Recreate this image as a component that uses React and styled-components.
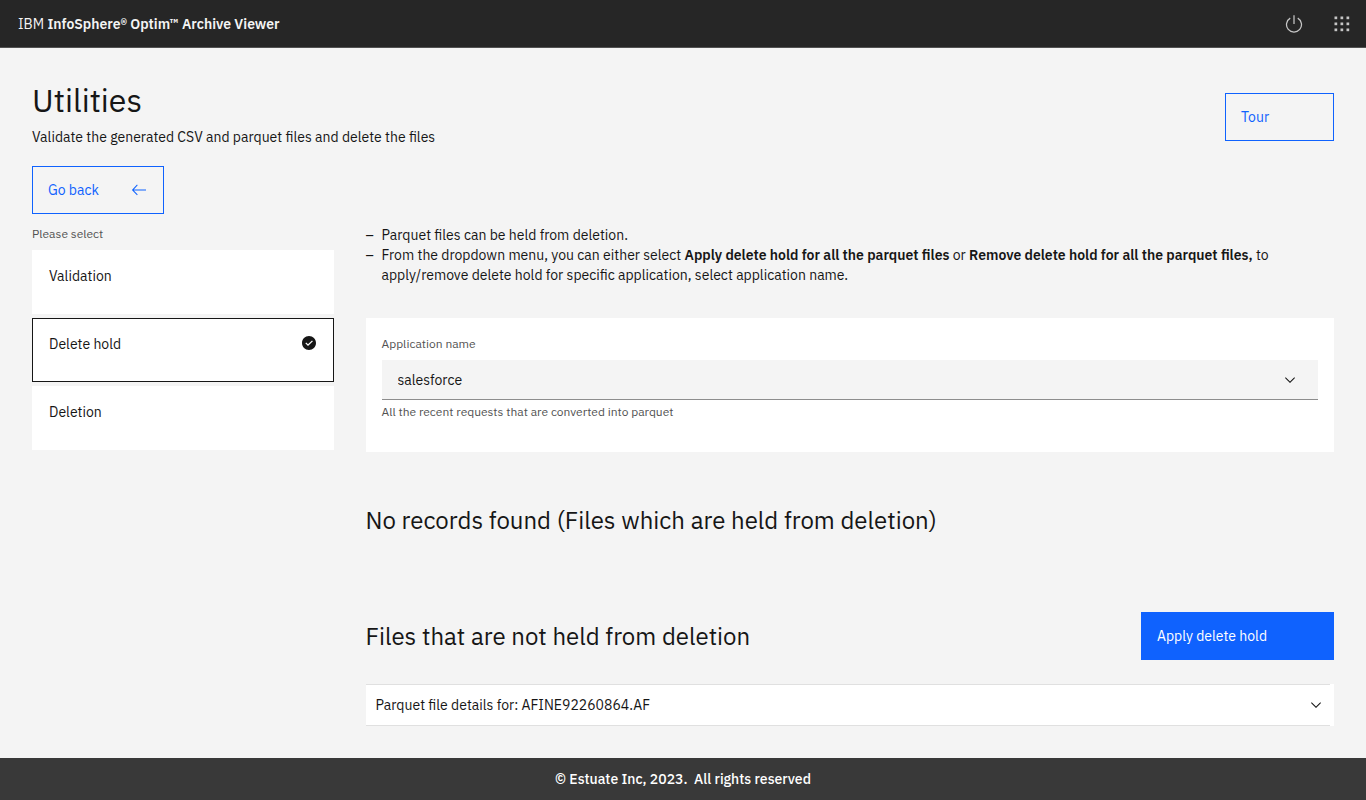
import React, { useState } from "react";
import styled, { createGlobalStyle } from "styled-components";

const GlobalStyle = createGlobalStyle`
  *, *::before, *::after { box-sizing: border-box; }
  body {
    margin: 0;
    background: #f4f4f4;
    color: #161616;
    font-family: "IBM Plex Sans", "Noto Sans", "Liberation Sans", sans-serif;
    font-size: 14px;
    line-height: 20px;
  }
  button, input, select { font: inherit; color: inherit; }
  h1, h2, p, ul { margin: 0; }
`;

const Page = styled.div`
  min-height: 100vh;
  display: flex;
  flex-direction: column;
`;

const Header = styled.header`
  height: 48px;
  display: flex;
  align-items: center;
  justify-content: space-between;
  padding-left: 18px;
  background: #262626;
  color: #f4f4f4;
  border-bottom: 1px solid #525252;
`;

const Brand = styled.a`
  color: inherit;
  text-decoration: none;
  strong { font-weight: 600; }
`;

const HeaderActions = styled.div`
  display: flex;
`;

const IconButton = styled.button`
  width: 48px;
  height: 48px;
  display: flex;
  align-items: center;
  justify-content: center;
  padding: 0;
  border: 0;
  background: none;
  color: #c6c6c6;
`;

const Icon = styled.svg`
  flex: none;
  display: block;
  fill: currentColor;
`;

const Main = styled.main`
  flex: 1;
  padding: 32px;
`;

const Intro = styled.div`
  display: flex;
  align-items: center;
  justify-content: space-between;
  padding-bottom: 20px;
`;

const Title = styled.h1`
  font-size: 32px;
  line-height: 40px;
  font-weight: 400;
  margin-bottom: 8px;
`;

const Subtitle = styled.p`
  line-height: 18px;
`;

const IntroActions = styled.div`
  padding-top: 8px;
`;

const Button = styled.button`
  min-width: ${(p) => p.$minWidth || 0}px;
  height: 48px;
  display: inline-flex;
  align-items: center;
  justify-content: space-between;
  padding: 0 ${(p) => (p.$icon ? 16 : 63)}px 0 15px;
  border: 1px solid #0f62fe;
  background: ${(p) => (p.$primary ? "#0f62fe" : "transparent")};
  color: ${(p) => (p.$primary ? "#ffffff" : "#0f62fe")};
`;

const Columns = styled.div`
  display: grid;
  grid-template-columns: repeat(16, minmax(0, 1fr));
  column-gap: 32px;
`;

const Sidebar = styled.fieldset`
  grid-column: span 4;
  min-width: 0;
  margin: 0;
  padding: 0;
  border: 0;
`;

const SmallText = styled.span`
  display: block;
  font-size: 12px;
  line-height: 16px;
  color: #525252;
`;

const Legend = styled(SmallText)`
  padding: 12px 0 0;
`;

const Tiles = styled.div`
  display: flex;
  flex-direction: column;
  gap: 4px;
  margin-top: 8px;
`;

const Tile = styled.label`
  min-height: 64px;
  display: flex;
  justify-content: space-between;
  padding: 16px;
  line-height: 18px;
  background: #ffffff;
  border: 1px solid ${(p) => (p.$selected ? "#161616" : "#ffffff")};
`;

const HiddenRadio = styled.input`
  position: absolute;
  opacity: 0;
  width: 1px;
  height: 1px;
  margin: 0;
`;

const Content = styled.div`
  grid-column: span 12;
  padding-top: 11px;
`;

const Notes = styled.ul`
  padding: 0;
  list-style: none;
`;

const Note = styled.li`
  display: flex;
  strong { font-weight: 600; }
  &::before { content: "–"; flex: none; width: 16px; }
`;

const Card = styled.section`
  margin-top: 33px;
  padding: 18px 16px 32px;
  background: #ffffff;
`;

const SelectBox = styled.div`
  position: relative;
  margin: 8px 0 4px;
`;

const Select = styled.select`
  appearance: none;
  display: block;
  width: 100%;
  height: 40px;
  padding: 0 48px 0 16px;
  border: 0;
  border-bottom: 1px solid #8d8d8d;
  border-radius: 0;
  background: #f4f4f4;
`;

const SelectArrow = styled.span`
  position: absolute;
  top: 12px;
  right: 20px;
  pointer-events: none;
`;

const Heading = styled.h2`
  font-size: 24px;
  line-height: 32px;
  font-weight: 400;
`;

const EmptyHeading = styled(Heading)`
  margin-top: 52px;
`;

const SectionBar = styled.div`
  display: flex;
  align-items: center;
  justify-content: space-between;
  margin: 76px 0 24px;
`;

const Accordion = styled.div`
  padding-right: 4px;
  background: #ffffff;
`;

const AccordionButton = styled.button`
  width: 100%;
  height: 42px;
  display: flex;
  align-items: center;
  justify-content: space-between;
  padding: 0 6px 0 10px;
  border: 0;
  border-top: 1px solid #e0e0e0;
  border-bottom: 1px solid #e0e0e0;
  background: none;
  text-align: left;
`;

const Footer = styled.footer`
  height: 42px;
  display: flex;
  align-items: center;
  justify-content: center;
  background: #393939;
  color: #ffffff;
  font-weight: 500;
  white-space: pre;
`;

const Chevron = () => (
  <Icon width="16" height="16" viewBox="0 0 16 16" aria-hidden="true">
    <path d="M8 11L3 6 3.7 5.3 8 9.6 12.3 5.3 13 6z" />
  </Icon>
);

const Power = () => (
  <Icon width="20" height="20" viewBox="0 0 32 32" aria-hidden="true">
    <path d="M22.5,5.74l-1,1.73a11,11,0,1,1-11,0l-1-1.73a13,13,0,1,0,13,0Z" />
    <path d="M15 2H17V16H15z" />
  </Icon>
);

const Switcher = () => (
  <Icon width="20" height="20" viewBox="0 0 20 20" aria-hidden="true">
    {[2, 8, 14].map((y) =>
      [2, 8, 14].map((x) => (
        <rect key={`${x}-${y}`} x={x + 0.5} y={y + 0.5} width="2.7" height="2.7" />
      ))
    )}
  </Icon>
);

const ArrowLeft = () => (
  <Icon width="16" height="16" viewBox="0 0 16 16" aria-hidden="true">
    <path d="M6.7 3.3L6 2.6 0.9 8 6 13.2 6.7 12.5 2.8 8.5H15V7.5H2.8z" />
  </Icon>
);

const CheckmarkFilled = () => (
  <Icon width="16" height="16" viewBox="0 0 16 16" aria-hidden="true">
    <path
      fillRule="evenodd"
      d="M8 1C4.1 1 1 4.1 1 8s3.1 7 7 7 7-3.1 7-7-3.1-7-7-7zM7 11L4.3 8.3l.9-.8L7 9.3l4-3.9.9.8L7 11z"
    />
  </Icon>
);

const OPTIONS = ["Validation", "Delete hold", "Deletion"];

export default function App() {
  const [selected, setSelected] = useState("Delete hold");
  return (
    <Page>
      <GlobalStyle />
      <Header>
        <Brand href="#">
          IBM <strong>InfoSphere® Optim™ Archive Viewer</strong>
        </Brand>
        <HeaderActions>
          <IconButton aria-label="Log out"><Power /></IconButton>
          <IconButton aria-label="App switcher"><Switcher /></IconButton>
        </HeaderActions>
      </Header>
      <Main>
        <Intro>
          <div>
            <Title>Utilities</Title>
            <Subtitle>Validate the generated CSV and parquet files and delete the files</Subtitle>
          </div>
          <IntroActions>
            <Button $minWidth={109}>Tour</Button>
          </IntroActions>
        </Intro>
        <Button $icon $minWidth={132}>
          Go back
          <ArrowLeft />
        </Button>
        <Columns>
          <Sidebar>
            <Legend as="legend">Please select</Legend>
            <Tiles>
              {OPTIONS.map((name) => (
                <Tile key={name} $selected={name === selected}>
                  <HiddenRadio
                    type="radio"
                    name="utility"
                    checked={name === selected}
                    onChange={() => setSelected(name)}
                  />
                  {name}
                  {name === selected && <CheckmarkFilled />}
                </Tile>
              ))}
            </Tiles>
          </Sidebar>
          <Content>
            <Notes>
              <Note>Parquet files can be held from deletion.</Note>
              <Note>
                <span>
                  From the dropdown menu, you can either select{" "}
                  <strong>Apply delete hold for all the parquet files</strong> or{" "}
                  <strong>Remove delete hold for all the parquet files,</strong> to apply/remove
                  delete hold for specific application, select application name.
                </span>
              </Note>
            </Notes>
            <Card>
              <SmallText as="label" htmlFor="application">Application name</SmallText>
              <SelectBox>
                <Select id="application" aria-describedby="application-help">
                  <option>salesforce</option>
                </Select>
                <SelectArrow><Chevron /></SelectArrow>
              </SelectBox>
              <SmallText id="application-help">
                All the recent requests that are converted into parquet
              </SmallText>
            </Card>
            <EmptyHeading>No records found (Files which are held from deletion)</EmptyHeading>
            <SectionBar>
              <Heading>Files that are not held from deletion</Heading>
              <Button $primary $minWidth={193}>Apply delete hold</Button>
            </SectionBar>
            <Accordion>
              <AccordionButton aria-expanded="false">
                Parquet file details for: AFINE92260864.AF
                <Chevron />
              </AccordionButton>
            </Accordion>
          </Content>
        </Columns>
      </Main>
      <Footer>{"© Estuate Inc, 2023.  All rights reserved"}</Footer>
    </Page>
  );
}
